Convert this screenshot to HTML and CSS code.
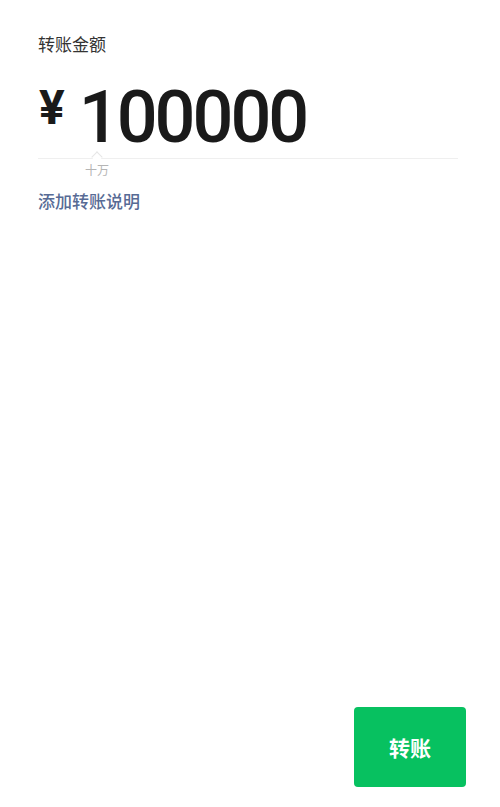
FILE: index.html
```html
<!DOCTYPE html>
<html lang="zh-CN">
<head>
<meta charset="UTF-8">
<meta name="viewport" content="width=device-width, initial-scale=1.0">
<title>转账</title>
<link rel="stylesheet" href="styles.css">
</head>
<body>

<div class="page">
    <div class="panel">
        <div class="label">转账金额</div>

        <div class="amount-row">
            <span class="currency">¥</span>
            <span class="amount">100000</span>
        </div>

        <div class="hint">
            <span class="unit">十万</span>
        </div>

        <a class="remark" href="#">添加转账说明</a>
    </div>

    <div class="footer">
        <button class="pay-button">转账</button>
    </div>
</div>

</body>
</html>
```

FILE: styles.css
```css
body {
    margin: 0;
    padding: 0;
    background-color: #fff;
    font-family: "Noto Sans CJK SC", "Noto Sans", sans-serif;
}

.page {
    display: flex;
    flex-direction: column;
    height: 807px;
    box-sizing: border-box;
    padding: 32px 42px 20px 38px;
}

.label {
    font-size: 17px;
    line-height: 24px;
    color: #333;
}

.amount-row {
    display: flex;
    align-items: flex-start;
    margin-top: 26px;
    padding-bottom: 4px;
    border-bottom: 1px solid #efefef;
}

.currency {
    font-family: Roboto, sans-serif;
    font-weight: 700;
    font-size: 48px;
    line-height: 48px;
    margin-top: 2px;
    margin-left: 1px;
    margin-right: 14px;
    color: #1a1a1a;
}

.amount {
    font-family: Roboto, sans-serif;
    font-weight: 500;
    font-size: 72px;
    line-height: 72px;
    letter-spacing: -3px;
    color: #1a1a1a;
}

.hint {
    position: relative;
    padding-left: 47px;
    margin-top: 3px;
    height: 16px;
    font-size: 12px;
    line-height: 16px;
}

.hint::before {
    content: "";
    position: absolute;
    left: 55px;
    top: -9px;
    width: 7px;
    height: 7px;
    background-color: #fff;
    border-left: 1px solid #e6e6e6;
    border-top: 1px solid #e6e6e6;
    transform: rotate(45deg);
}

.unit {
    color: #b5b5b5;
}

.remark {
    display: block;
    margin-top: 11px;
    font-size: 17px;
    line-height: 24px;
    font-weight: 500;
    color: #576b95;
    text-decoration: none;
}

.footer {
    margin-top: auto;
    display: flex;
    justify-content: flex-end;
    margin-right: -8px;
}

.pay-button {
    width: 112px;
    height: 80px;
    border: none;
    border-radius: 4px;
    background-color: #07c160;
    color: #fff;
    font-family: "Noto Sans CJK SC", sans-serif;
    font-size: 21px;
    font-weight: 700;
    cursor: pointer;
}
```
